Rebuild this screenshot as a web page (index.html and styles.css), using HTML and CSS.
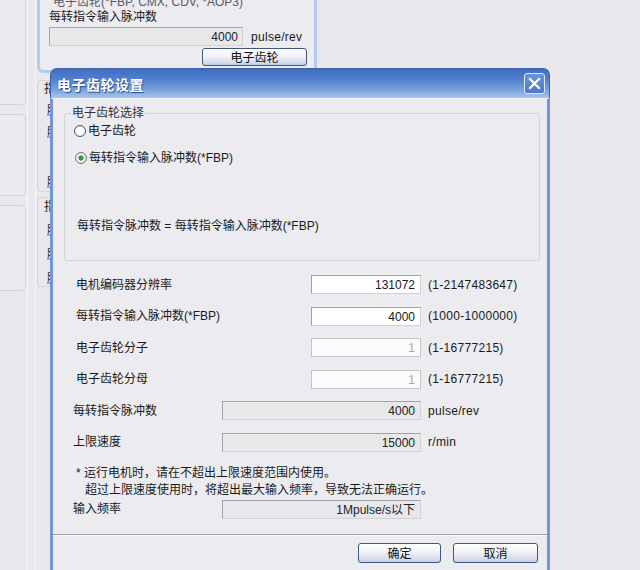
FILE: index.html
```html
<!DOCTYPE html>
<html lang="zh-CN">

<head>
    <meta charset="UTF-8">
    <meta name="viewport" content="width=device-width, initial-scale=1.0">
    <title>电子齿轮设置</title>
    <link rel="stylesheet" href="styles.css">
</head>

<body>
    <!-- 背后的主画面 -->
    <div class="app">
        <div class="side">
            <div class="panel p1"></div>
            <div class="panel p2"></div>
            <div class="panel p3"></div>
        </div>
        <div class="rail"></div>
        <div class="main">
            <div class="grp active">
                <div class="grp-title">电子齿轮(*FBP, CMX, CDV, *AOP3)</div>
                <div class="grp-lbl">每转指令输入脉冲数</div>
                <div class="grp-row">
                    <div class="ro-box wide">4000</div>
                    <span class="unit">pulse/rev</span>
                </div>
                <div class="grp-btns">
                    <button class="btn gear">电子齿轮</button>
                </div>
            </div>
            <!-- 被对话框挡住的分组，只露出左边一点 -->
            <div class="grp g2">
                <div class="stub t">指</div>
                <div class="stub l1">脉</div>
                <div class="stub l2">脉</div>
                <div class="stub l3">脉</div>
            </div>
            <div class="grp g3">
                <div class="stub t">指</div>
                <div class="stub l4">脉</div>
                <div class="stub l4">脉</div>
                <div class="stub l4">脉</div>
            </div>
        </div>
    </div>

    <!-- 电子齿轮设置 对话框 -->
    <div class="dialog">
        <div class="titlebar">
            <span class="title">电子齿轮设置</span>
            <span class="close">
                <svg width="13" height="13" viewBox="0 0 13 13">
                    <path d="M2 2 L11 11 M11 2 L2 11" stroke="#fff" stroke-width="2.2" stroke-linecap="square" />
                </svg>
            </span>
        </div>
        <div class="dlg-body">
            <fieldset class="sel">
                <legend>电子齿轮选择</legend>
                <div class="radio-row r1"><span class="radio"></span>电子齿轮</div>
                <div class="radio-row r2"><span class="radio on"></span>每转指令输入脉冲数(*FBP)</div>
                <div class="formula">每转指令脉冲数 = 每转指令输入脉冲数(*FBP)</div>
            </fieldset>

            <div class="rows">
                <div class="row">
                    <span class="lbl">电机编码器分辨率</span>
                    <div class="field">131072</div>
                    <span class="unit">(1-2147483647)</span>
                </div>
                <div class="row">
                    <span class="lbl">每转指令输入脉冲数(*FBP)</span>
                    <div class="field">4000</div>
                    <span class="unit">(1000-1000000)</span>
                </div>
                <div class="row">
                    <span class="lbl">电子齿轮分子</span>
                    <div class="field off">1</div>
                    <span class="unit">(1-16777215)</span>
                </div>
                <div class="row">
                    <span class="lbl">电子齿轮分母</span>
                    <div class="field off">1</div>
                    <span class="unit">(1-16777215)</span>
                </div>
                <div class="row ro">
                    <span class="lbl">每转指令脉冲数</span>
                    <div class="ro-box">4000</div>
                    <span class="unit">pulse/rev</span>
                </div>
                <div class="row ro">
                    <span class="lbl">上限速度</span>
                    <div class="ro-box">15000</div>
                    <span class="unit">r/min</span>
                </div>
                <div class="note">
                    <div>* 运行电机时，请在不超出上限速度范围内使用。</div>
                    <div class="indent">超过上限速度使用时，将超出最大输入频率，导致无法正确运行。</div>
                </div>
                <div class="row ro last">
                    <span class="lbl">输入频率</span>
                    <div class="ro-box">1Mpulse/s以下</div>
                </div>
            </div>

            <div class="sep"></div>
            <div class="actions">
                <button class="btn ok">确定</button>
                <button class="btn cancel">取消</button>
            </div>
        </div>
    </div>
</body>

</html>
```

FILE: styles.css
```css
* {
    box-sizing: border-box;
}

body {
    margin: 0;
    width: 640px;
    height: 570px;
    overflow: hidden;
    position: relative;
    background-color: #e9e8ed;
    font-family: "Liberation Sans", "Noto Sans CJK SC", sans-serif;
    font-size: 12px;
    line-height: 14px;
    color: #1a1a1a;
}

/* 背后画面 */
.app {
    display: flex;
    height: 570px;
}

.side {
    width: 26px;
    display: flex;
    flex-direction: column;
    gap: 9px;
    margin-top: -10px;
}

.panel {
    border: 1px solid #d3d3d8;
    border-left: none;
    border-radius: 0 5px 5px 0;
    background-color: #ebeaee;
}

.p1 {
    height: 115px;
}

.p2 {
    height: 82px;
}

.p3 {
    height: 86px;
}

.rail {
    width: 9px;
    margin-left: 1px;
    border-left: 1px solid #f6f6f8;
    border-right: 1px solid #f6f6f8;
}

.main {
    width: 280px;
    margin-left: 1px;
    display: flex;
    flex-direction: column;
}

.grp {
    border: 1px solid #d6d6da;
    border-radius: 4px;
    padding: 0 7px 4px 7px;
}

.grp.active {
    margin-top: -8px;
    border: 3px solid #b4caef;
    border-radius: 6px;
    background-color: #ecebf0;
    padding: 0 7px 4px 9px;
}

.grp-title {
    padding-left: 4px;
    color: #5a5a66;
    white-space: nowrap;
}

.grp-lbl {
    margin-top: 1px;
    white-space: nowrap;
}

.grp-row {
    display: flex;
    align-items: center;
    margin-top: 3px;
}

.grp-btns {
    display: flex;
    justify-content: flex-end;
    margin-top: 2px;
}

/* 单个字，右半边被对话框盖住 */
.stub {
    white-space: nowrap;
}

.g2 {
    margin-top: 7px;
    height: 112px;
    padding-left: 6px;
}

.g2 .t {
    margin-top: 1px;
}

.g2 .l1 {
    margin-top: 8px;
    margin-left: 3px;
}

.g2 .l2 {
    margin-top: 8px;
    margin-left: 3px;
}

.g2 .l3 {
    margin-top: 36px;
    margin-left: 3px;
}

.g3 {
    margin-top: 5px;
    height: 90px;
    padding-left: 6px;
}

.g3 .t {
    margin-top: 2px;
}

.g3 .l4 {
    margin-top: 10px;
    margin-left: 3px;
}

/* 对话框 */
.dialog {
    position: absolute;
    left: 50px;
    top: 68px;
    width: 500px;
}

.titlebar {
    height: 30px;
    display: flex;
    align-items: center;
    justify-content: space-between;
    padding: 0 4px 0 6px;
    border: 1px solid #3a62aa;
    border-bottom: none;
    border-radius: 7px 7px 0 0;
    background: linear-gradient(#416dbf 0%, #5080cf 35%, #76a0dd 70%, #aac4ec 100%);
}

.title {
    color: #fff;
    font-family: "Noto Sans CJK SC", sans-serif;
    font-size: 14px;
    font-weight: bold;
    letter-spacing: 0.5px;
    text-shadow: 1px 1px 1px #264a8c;
}

.close {
    width: 21px;
    height: 21px;
    display: flex;
    align-items: center;
    justify-content: center;
    border: 1px solid #dce6f7;
    border-radius: 3px;
    background: linear-gradient(#6a95da, #4b79c8);
}

.dlg-body {
    height: 480px;
    background-color: #ecebef;
    border-left: 3px solid #7296d3;
    border-right: 3px solid #7296d3;
    border-top: 1px solid #f4f6fb;
}

fieldset.sel {
    margin: 7px 7px 0 11px;
    padding: 0 6px 27px 6px;
    border: 1px solid #d4d4d8;
    border-radius: 3px;
}

fieldset.sel legend {
    padding: 0 1px;
    color: #333;
}

.radio-row {
    display: flex;
    align-items: center;
    height: 14px;
    margin-left: 3px;
}

.r1 {
    margin-top: 4px;
}

.r2 {
    margin-top: 13px;
    margin-left: 4px;
}

.radio {
    width: 12px;
    height: 12px;
    margin-right: 2px;
    border: 1px solid #4e5663;
    border-radius: 50%;
    background: radial-gradient(circle, #fff 0 3px, #e4e4e6 6px);
}

.radio.on {
    border-color: #6f7680;
    background: radial-gradient(circle, #2f9a3a 0 2.3px, #fafafa 3px, #dcdcde 6px);
}

.formula {
    margin-top: 54px;
    margin-left: 6px;
}

.rows {
    margin-top: 14px;
    padding-left: 20px;
}

.row {
    display: flex;
    align-items: center;
    height: 19px;
    margin-bottom: 12.6px;
}

.row .lbl {
    width: 238px;
    padding-left: 3px;
    white-space: nowrap;
}

.row.ro .lbl {
    width: 149px;
    padding-left: 0;
}

.field {
    width: 110px;
    height: 19px;
    padding: 2px 5px 0 0;
    text-align: right;
    background-color: #fff;
    border: 1px solid #a2a2a6;
    border-right-color: #d0d0d4;
    border-bottom-color: #d0d0d4;
}

.field.off {
    color: #a8a8a8;
    background-color: #fcfcfc;
    border-color: #c4c4c8;
}

.ro-box {
    width: 199px;
    height: 19px;
    padding: 2px 5px 0 0;
    text-align: right;
    background-color: #e8e8eb;
    border: 1px solid #a4a4a8;
    border-right-color: #d2d2d6;
    border-bottom-color: #d2d2d6;
    color: #222;
}

.ro-box.wide {
    width: 194px;
    padding-right: 4px;
}

.unit {
    margin-left: 7px;
    white-space: nowrap;
    letter-spacing: 0.3px;
}

.grp-row .unit {
    margin-left: 8px;
}

.note {
    margin-top: 0;
    padding-left: 3px;
    line-height: 17px;
    white-space: nowrap;
}

.note .indent {
    padding-left: 9px;
}

.row.last {
    margin-top: 1px;
    margin-bottom: 0;
}

.sep {
    margin-top: 15px;
    border-top: 1px solid #a2a2a6;
    border-bottom: 1px solid #fafafa;
}

.actions {
    display: flex;
    justify-content: flex-end;
    gap: 12px;
    margin-top: 7px;
    padding-right: 9px;
}

.btn {
    height: 20px;
    padding: 0;
    font-family: "Noto Sans CJK SC", sans-serif;
    font-size: 12px;
    line-height: 16px;
    color: #111;
    border: 1px solid #44557a;
    border-radius: 3px;
    background: linear-gradient(#ffffff 0%, #f0f2f7 45%, #d5dced 85%, #c3cde2 100%);
}

.btn.gear {
    width: 105px;
    height: 18px;
    line-height: 14px;
}

.btn.ok {
    width: 83px;
}

.btn.cancel {
    width: 85px;
}
```
